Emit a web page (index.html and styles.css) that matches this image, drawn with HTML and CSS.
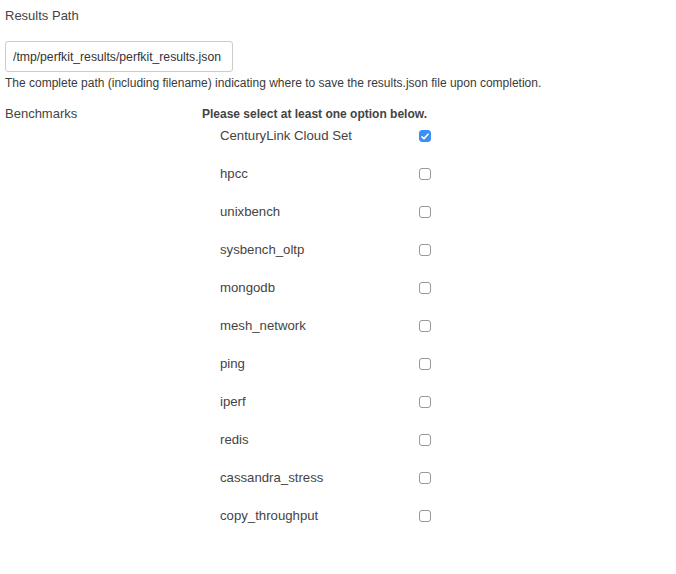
FILE: index.html
```html
<!DOCTYPE html>
<html>
<head>
<meta charset="utf-8">
<link rel="stylesheet" href="styles.css">
</head>
<body>
<div class="page">
  <div class="field">
    <div class="field-label">Results Path</div>
    <input class="text-input" type="text" value="/tmp/perfkit_results/perfkit_results.json">
    <div class="help">The complete path (including filename) indicating where to save the results.json file upon completion.</div>
  </div>
  <div class="bench">
    <div class="field-label">Benchmarks</div>
    <div class="options">
      <div class="hint">Please select at least one option below.</div>
      <label class="opt"><span class="opt-name">CenturyLink Cloud Set</span><span class="cb checked"><svg width="8" height="7" viewBox="0 0 8 7"><path d="M1 3.8 L3 5.6 L7 1.2" fill="none" stroke="#fff" stroke-width="1.6" stroke-linecap="round" stroke-linejoin="round"/></svg></span></label>
      <label class="opt"><span class="opt-name">hpcc</span><span class="cb"></span></label>
      <label class="opt"><span class="opt-name">unixbench</span><span class="cb"></span></label>
      <label class="opt"><span class="opt-name">sysbench_oltp</span><span class="cb"></span></label>
      <label class="opt"><span class="opt-name">mongodb</span><span class="cb"></span></label>
      <label class="opt"><span class="opt-name">mesh_network</span><span class="cb"></span></label>
      <label class="opt"><span class="opt-name">ping</span><span class="cb"></span></label>
      <label class="opt"><span class="opt-name">iperf</span><span class="cb"></span></label>
      <label class="opt"><span class="opt-name">redis</span><span class="cb"></span></label>
      <label class="opt"><span class="opt-name">cassandra_stress</span><span class="cb"></span></label>
      <label class="opt"><span class="opt-name">copy_throughput</span><span class="cb"></span></label>
    </div>
  </div>
</div>
</body>
</html>
```
FILE: styles.css
```css
html, body {
  margin: 0;
  padding: 0;
  background: #fff;
}
body {
  font-family: "Liberation Sans", Arial, sans-serif;
  color: #3a3a3a;
  font-size: 13px;
}
.page {
  padding: 8px 5px 0 5px;
}
.field-label {
  font-size: 13px;
  line-height: 16px;
  color: #444;
}
.text-input {
  display: block;
  box-sizing: border-box;
  margin: 17px 0 0 0;
  width: 228px;
  height: 31px;
  padding: 0 7px;
  border: 1px solid #ccc;
  border-radius: 3px;
  font-family: inherit;
  font-size: 12.2px;
  color: #333;
  background: #fff;
  outline: none;
}
.help {
  font-size: 12px;
  line-height: 16px;
  margin-top: 3px;
}
.bench {
  display: flex;
  margin-top: 15px;
}
.bench .field-label {
  width: 197px;
}
.options {
  display: flex;
  flex-direction: column;
}
.hint {
  font-weight: bold;
  font-size: 12px;
  line-height: 16px;
  color: #444;
}
.opt {
  display: flex;
  align-items: center;
  padding: 6px 0 16px 18px;
  height: 16px;
}
.opt-name {
  width: 199px;
  font-size: 13.2px;
  line-height: 16px;
  color: #444;
}
.cb {
  box-sizing: border-box;
  width: 12px;
  height: 12px;
  border: 1px solid #999;
  border-radius: 3px;
  display: flex;
  align-items: center;
  justify-content: center;
  background: #fff;
}
.cb.checked {
  background: #3b8ff5;
  border-color: #3b8ff5;
}
```
